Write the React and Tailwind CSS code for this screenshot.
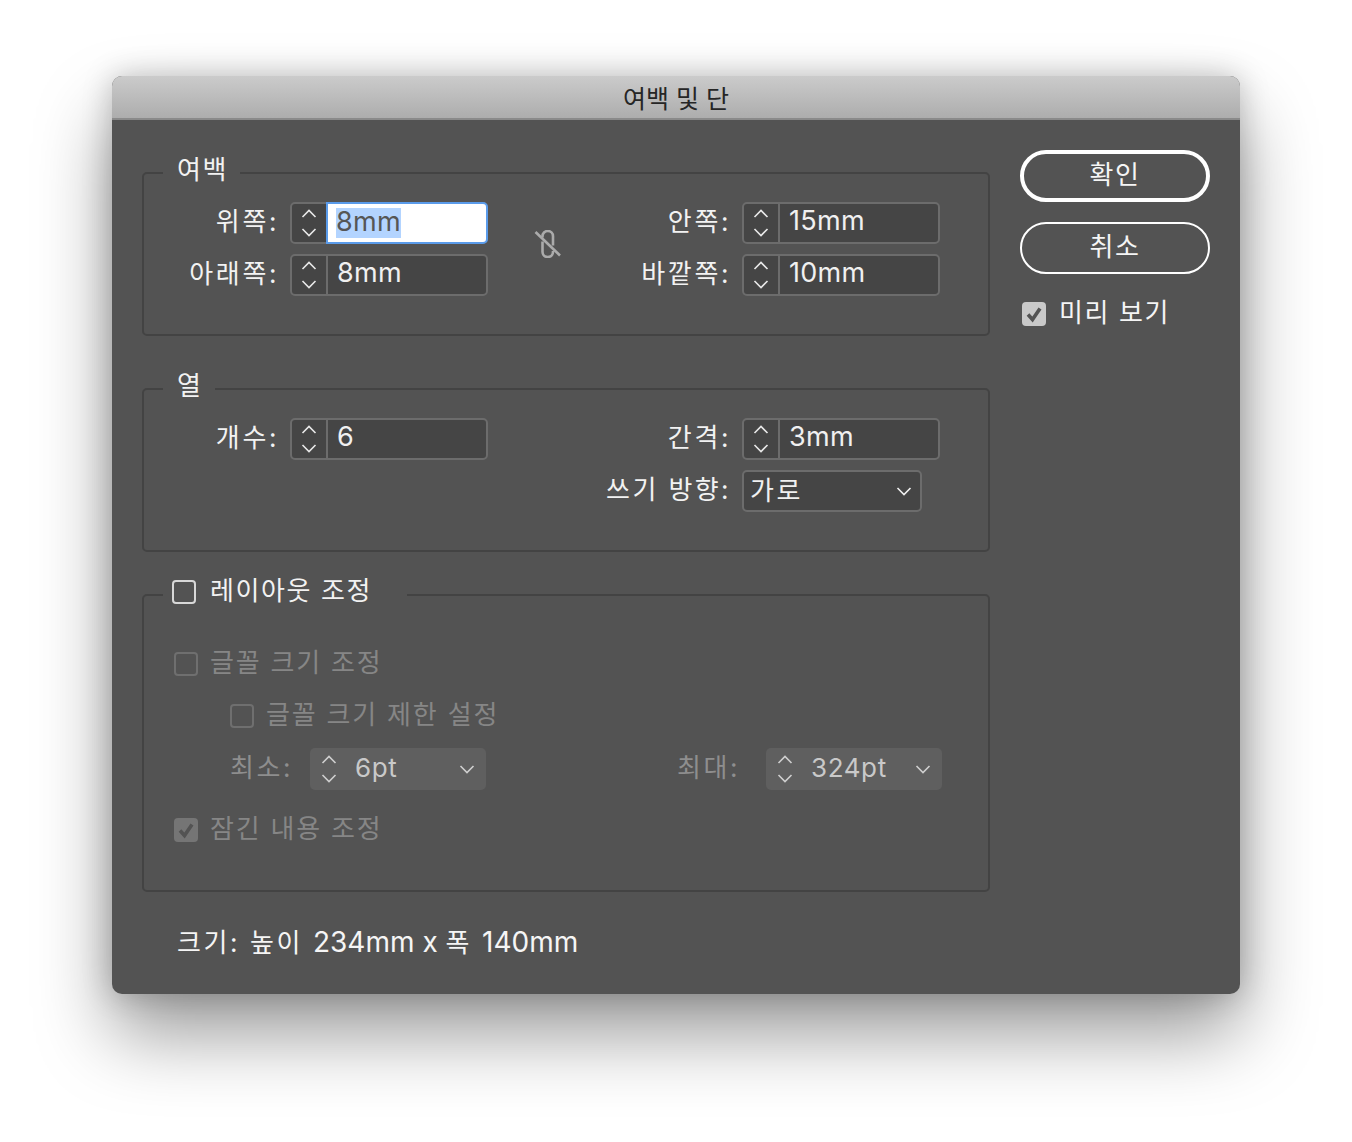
import React from "react";

const Chevron = ({ up, className = "" }) => (
  <svg viewBox="0 0 16 9" className={`w-[16px] h-[9px] ${className}`} fill="none" stroke="currentColor" strokeWidth="1.6">
    <path d={up ? "M1.5 8 L8 1.5 L14.5 8" : "M1.5 1 L8 7.5 L14.5 1"} />
  </svg>
);

const Check = ({ className = "" }) => (
  <svg viewBox="0 0 24 24" className={`w-6 h-6 ${className}`} fill="none" stroke="currentColor" strokeWidth="3.6">
    <path d="M6 12.5 L10.5 17.5 L18 6.5" />
  </svg>
);

const Stepper = () => (
  <div className="w-[34px] h-full shrink-0 flex flex-col items-center justify-center gap-[10px] text-[#e8e8e8]">
    <Chevron up />
    <Chevron />
  </div>
);

const Field = ({ value, active }) => (
  <div className="w-[198px] h-[42px] flex rounded-[5px] border-2 border-[#6c6c6c] bg-[#454545] text-[#f0f0f0] text-[27px]">
    <Stepper />
    {active ? (
      <div className="flex-1 flex items-center pl-[8px] bg-white border-2 border-[#5a9bea] rounded-r-[5px] -my-[2px] -mr-[2px] text-[#565656]">
        <span className="bg-[#b3d4ff] h-[30px] leading-[28px] -mt-[1px] tracking-[0.3px]">{value}</span>
      </div>
    ) : (
      <div className="flex-1 flex items-center pl-[9px] border-l-2 border-[#6c6c6c] leading-none">
        <span className="-translate-y-[3px] tracking-[0.3px]">{value}</span>
      </div>
    )}
  </div>
);

const Row = ({ label, children, className = "" }) => (
  <div className={`flex items-center justify-end gap-[11px] ${className}`}>
    <span className="whitespace-nowrap text-[#f2f2f2] tracking-[2.6px] -translate-y-[2px]">{label}</span>
    {children}
  </div>
);

const Group = ({ legend, className = "", legendClass = "", children }) => (
  <div className={`relative border-2 border-[#434343] rounded-[5px] ${className}`}>
    <div className={`absolute -top-[20px] left-[19px] h-[34px] bg-[#535353] text-[#f2f2f2] flex items-center tracking-[1.6px] whitespace-nowrap ${legendClass}`}>
      {legend}
    </div>
    {children}
  </div>
);

const Box = ({ className = "", children }) => (
  <div className={`w-[24px] h-[24px] shrink-0 rounded-[4px] flex items-center justify-center ${className}`}>{children}</div>
);

const Combo = ({ value, className = "" }) => (
  <div className={`w-[176px] h-[42px] flex items-center rounded-[5px] bg-[#5f5f5f] text-[#c9c9c9] ${className}`}>
    <div className="w-[36px] pl-[11px] flex flex-col gap-[10px] shrink-0 text-[#cfcfcf]">
      <Chevron up />
      <Chevron />
    </div>
    <span className="pl-[9px] flex-1 -translate-y-[2px] tracking-[0.6px]">{value}</span>
    <Chevron className="mr-[11px] w-[14px] text-[#cfcfcf]" />
  </div>
);

const Link = () => (
  <svg viewBox="0 0 28 28" className="w-[28px] h-[28px] ml-[46px] text-[#ababab]" fill="none" stroke="currentColor" strokeWidth="2.6">
    <path d="M1.5 2 L26 25.5" />
    <path d="M8.5 7.5 V6.2 a5.25 5.25 0 0 1 10.5 0 V15.5" />
    <path d="M8.5 11.5 V21.8 a5.25 5.25 0 0 0 10.5 0 V21" />
  </svg>
);

export default function App() {
  return (
    <div
      className="min-h-[1142px] bg-white pt-[76px] pl-[112px] text-[26px] overflow-hidden"
      style={{ fontFamily: 'Inter, "Noto Sans CJK KR", sans-serif' }}
    >
      <div className="w-[1128px] h-[918px] rounded-[10px] overflow-hidden bg-[#535353] shadow-[0_40px_76px_rgba(0,0,0,0.4),0_0_30px_rgba(0,0,0,0.22)]">
        <div className="h-[44px] pt-[5px] flex items-center justify-center bg-gradient-to-b from-[#cbcbcb] to-[#adadad] border-b-2 border-[#8a8a8a] text-[#262626] text-[25px]">
          여백 및 단
        </div>

        <div className="flex pl-[30px]">
          <div className="w-[848px] pt-[52px]">
            <Group legend={<span className="-translate-y-[2px]">여백</span>} legendClass="pl-[14px] pr-[12px]" className="h-[164px] pt-[28px]">
              <div className="flex">
                <div className="w-[344px] flex flex-col gap-[10px]">
                  <Row label="위쪽:"><Field value="8mm" active /></Row>
                  <Row label="아래쪽:"><Field value="8mm" /></Row>
                </div>
                <div className="w-[100px] pt-[28px]"><Link /></div>
                <div className="w-[352px] flex flex-col gap-[10px]">
                  <Row label="안쪽:"><Field value="15mm" /></Row>
                  <Row label="바깥쪽:"><Field value="10mm" /></Row>
                </div>
              </div>
            </Group>

            <Group legend={<span className="-translate-y-[2px]">열</span>} legendClass="pl-[14px] pr-[12px]" className="h-[164px] pt-[28px] mt-[52px]">
              <div className="flex">
                <div className="w-[344px]">
                  <Row label="개수:"><Field value="6" /></Row>
                </div>
                <div className="w-[452px] flex flex-col gap-[10px]">
                  <Row label="간격:"><Field value="3mm" /></Row>
                  <div className="flex items-center justify-end gap-[11px]">
                    <span className="whitespace-nowrap text-[#f2f2f2] tracking-[2.4px] -translate-y-[2px]">쓰기 방향:</span>
                    <div className="w-[198px]">
                      <div className="w-[180px] h-[42px] flex items-center justify-between rounded-[5px] border-2 border-[#6c6c6c] bg-[#454545] text-[#f0f0f0] pl-[6px] pr-[8px]">
                        <span className="-translate-y-[1px] tracking-[2.6px]">가로</span>
                        <Chevron className="w-[15px]" />
                      </div>
                    </div>
                  </div>
                </div>
              </div>
            </Group>

            <Group
              className="h-[298px] pt-[54px] pl-[30px] mt-[42px] text-[#868686]"
              legendClass="pl-[9px] pr-[35px] gap-[14px]"
              legend={
                <>
                  <Box className="border-2 border-[#d8d8d8] -translate-y-[1px]" />
                  <span className="-translate-y-[3px]">레이아웃 조정</span>
                </>
              }
            >
              <div className="flex items-center gap-[12px] h-[28px] tracking-[1.8px]">
                <Box className="border-2 border-[#6f6f6f]" />
                <span className="-translate-y-[2px]">글꼴 크기 조정</span>
              </div>
              <div className="flex items-center gap-[12px] h-[28px] mt-[24px] ml-[56px] tracking-[1.8px]">
                <Box className="border-2 border-[#6f6f6f]" />
                <span className="-translate-y-[2px]">글꼴 크기 제한 설정</span>
              </div>
              <div className="flex items-center mt-[18px] ml-[56px]">
                <span className="w-[80px] whitespace-nowrap text-[#8e8e8e] -translate-y-[2px] tracking-[2.6px]">최소:</span>
                <Combo value="6pt" />
                <span className="ml-[191px] w-[89px] whitespace-nowrap text-[#8e8e8e] -translate-y-[2px] tracking-[2.6px]">최대:</span>
                <Combo value="324pt" />
              </div>
              <div className="flex items-center gap-[12px] h-[28px] mt-[26px] tracking-[1.8px]">
                <Box className="bg-[#757575] text-[#535353]"><Check /></Box>
                <span className="-translate-y-[2px]">잠긴 내용 조정</span>
              </div>
            </Group>

            <div className="mt-[36px] h-[28px] pl-[35px] flex items-center text-[#f5f5f5] whitespace-nowrap">
              <div>
                <span className="tracking-[2.6px]">크기: 높이 </span>
                <span className="text-[28px]">234mm x </span>
                <span className="tracking-[2.6px]">폭 </span>
                <span className="text-[28px]">140mm</span>
              </div>
            </div>
          </div>

          <div className="w-[190px] ml-[30px] pt-[30px] text-[#f5f5f5]">
            <div className="h-[52px] rounded-full border-4 border-white flex items-center justify-center pb-[4px] tracking-[1.6px]">확인</div>
            <div className="h-[52px] mt-[20px] rounded-full border-2 border-white flex items-center justify-center pb-[4px] tracking-[1.6px]">취소</div>
            <div className="flex items-center gap-[13px] mt-[20px] pl-[2px] tracking-[1.6px]">
              <Box className="bg-[#c9c9c9] text-[#535353]"><Check /></Box>
              <span className="-translate-y-[1px] whitespace-nowrap">미리 보기</span>
            </div>
          </div>
        </div>
      </div>
    </div>
  );
}
